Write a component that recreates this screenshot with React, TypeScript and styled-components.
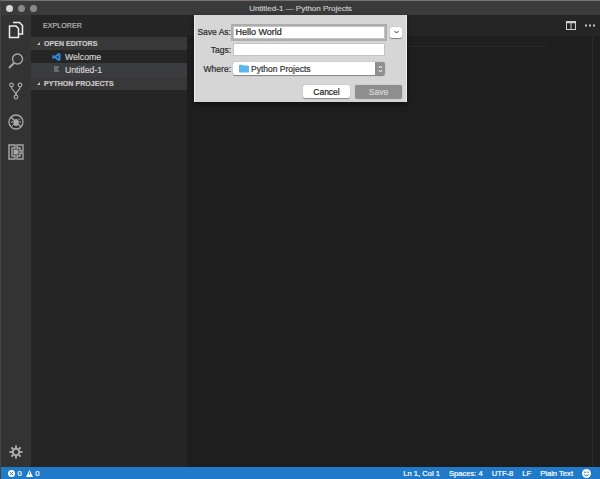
import React from "react";
import styled, { createGlobalStyle } from "styled-components";

const Global = createGlobalStyle`
  html, body { margin: 0; padding: 0; background: #fff; overflow: hidden; }
  * { box-sizing: border-box; }
`;
const Window = styled.div`
  position: relative; width: 600px; height: 479px; display: flex; flex-direction: column;
  background: #1e1e1e; font-family: "Liberation Sans", Arial, sans-serif; overflow: hidden;
  border-top: 1px solid #77716f; border-left: 1px solid #444;
  -webkit-text-stroke: 0.2px currentColor;
`;
const TitleBar = styled.div`
  position: relative; height: 14px; flex: none; background: #3b3b3b; display: flex; align-items: center; justify-content: center;
  color: #c6c6c6; font-size: 8px; font-weight: 400;
`;
const Lights = styled.div`
  position: absolute; left: 5px; top: 4px; display: flex; gap: 5px;
`;
const Light = styled.span<{ $c: string }>`
  width: 7px; height: 7px; border-radius: 50%; background: ${(p) => p.$c};
`;
const Body = styled.div`
  flex: 1; display: flex; min-height: 0;
`;
const Activity = styled.div`
  width: 30px; flex: none; background: #333; display: flex; flex-direction: column; align-items: center;
`;
const ActivityIcon = styled.div<{ $dim?: boolean }>`
  width: 30px; height: 30.5px; display: flex; align-items: center; justify-content: center;
  color: ${(p) => (p.$dim ? "#a8a8a8" : "#ececec")};
`;
const Spacer = styled.div`
  flex: 1;
`;
const Side = styled.div`
  width: 156px; flex: none; background: #252525; display: flex; flex-direction: column;
`;
const SideTitle = styled.div`
  height: 21.5px; padding: 0 0 0 12px; display: flex; align-items: center; color: #bbb; font-size: 7px; letter-spacing: 0.1px;
`;
const Section = styled.div`
  height: 13.4px; background: #383838; display: flex; align-items: center; gap: 4px; padding-left: 6px;
  color: #c8c8c8; font-size: 7px; font-weight: 700; letter-spacing: 0.05px;
`;
const Tri = styled.span`
  width: 0; height: 0; border-style: solid; border-width: 0 0 3px 3px; border-color: transparent transparent #c0c0c0 transparent;
`;
const FileRow = styled.div<{ $active?: boolean }>`
  height: 13.4px; display: flex; align-items: center; gap: 4px; padding-left: 21px; color: #d0d0d0; font-size: 8.7px;
  background: ${(p) => (p.$active ? "#3b3c40" : "transparent")};
`;
const FileIcon = styled.span`
  width: 9px; height: 9px; display: flex; align-items: center; justify-content: center; flex: none;
`;
const Editor = styled.div`
  flex: 1; display: flex; flex-direction: column; background: #1e1e1e; min-width: 0;
`;
const TabStrip = styled.div`
  height: 21px; flex: none; background: #252525; display: flex; align-items: center; justify-content: flex-end; gap: 9px; padding-right: 5px;
`;
const EditorBody = styled.div`
  flex: 1; display: flex; min-height: 0;
`;
const Code = styled.div`
  flex: 1; display: flex; flex-direction: column;
`;
const LineHighlight = styled.div`
  margin-top: 1px; height: 10px; background: #1f1f1f; border-bottom: 1px solid #282828;
`;
const MiniMap = styled.div`
  width: 52px; flex: none; display: flex; justify-content: flex-end; background: #1e1e1e;
`;
const ScrollEdge = styled.div`
  width: 8px; border-left: 1px solid #292929; background: #1f1f1f;
`;
const StatusBar = styled.div`
  height: 12px; flex: none; background: #207ac8; color: #fff; display: flex; align-items: center; justify-content: space-between;
  font-size: 7.6px; padding: 0 9px 0 7px;
`;
const StatusGroup = styled.div<{ $gap: number }>`
  display: flex; align-items: center; gap: ${(p) => p.$gap}px;
`;
const StatusItem = styled.span`
  display: inline-flex; align-items: center; gap: 2.5px;
`;
const Dialog = styled.div`
  position: absolute; left: 193px; top: 14px; width: 213px; height: 87px; background: #d6d6d6; color: #222;
  display: flex; flex-direction: column; padding: 9px 4px 0 0; font-size: 8.5px; box-shadow: 0 2px 5px rgba(0,0,0,.5); border-left: 1px solid #eee; border-right: 1px solid #eee;
`;
const FormRow = styled.div<{ $h: number }>`
  display: flex; align-items: center; height: ${(p) => p.$h}px; flex: none;
`;
const Label = styled.label`
  width: 36px; text-align: right; margin-right: 2px; flex: none; color: #2a2a2a;
`;
const Field = styled.div<{ $focus?: boolean }>`
  width: 152px; height: 13px; background: #fff; display: flex; align-items: center; padding-left: 1.5px; color: #222; font-size: 9px;
  border: 1px solid #c4c4c4;
  outline: ${(p) => (p.$focus ? "2px solid #adadad" : "none")};
  outline-offset: -0.5px;
`;
const Expand = styled.div`
  width: 12px; height: 11px; margin-left: 5px; background: #fff; border-radius: 2px; display: flex; align-items: center; justify-content: center; box-shadow: 0 0.5px 1px rgba(0,0,0,.4);
`;
const Select = styled.div`
  width: 152px; height: 13px; background: #fff; border-radius: 2px; display: flex; align-items: center; padding-left: 6px; gap: 2px; color: #333; font-size: 8.5px; box-shadow: 0 0.5px 1px rgba(0,0,0,.4); position: relative;
`;
const SelectStepper = styled.div`
  position: absolute; right: 0; top: 0; bottom: 0; width: 10px; background: #8f8f8f; border-radius: 0 2px 2px 0; display: flex; align-items: center; justify-content: center;
`;
const Actions = styled.div`
  display: flex; justify-content: flex-end; gap: 5px; margin-top: 7px;
`;
const Btn = styled.button<{ $disabled?: boolean }>`
  width: 47px; height: 13px; border: 0; padding: 0; border-radius: 2px; font: inherit; font-size: 8.5px;
  background: ${(p) => (p.$disabled ? "#8e8e8e" : "#fff")};
  color: ${(p) => (p.$disabled ? "#d8d8d8" : "#222")};
  box-shadow: 0 0.5px 1px rgba(0,0,0,.35);
`;

export default function App() {
  return (
    <Window>
      <Global />
      <TitleBar>
        <Lights>
          <Light $c="#d8d8d8" /><Light $c="#8a8a8a" /><Light $c="#8a8a8a" />
        </Lights>
        Untitled-1 — Python Projects
      </TitleBar>
      <Body>
        <Activity>
          <ActivityIcon>
            <svg width="18" height="18" viewBox="0 0 18 18" fill="none" stroke="currentColor" strokeWidth="1.5">
              <path d="M6 1.500h6.500l3 3V13H12" /><path d="M2.500 5H9l2.500 2.500v9h-9z" fill="#333" />
            </svg>
          </ActivityIcon>
          <ActivityIcon $dim>
            <svg width="18" height="18" viewBox="0 0 18 18" fill="none" stroke="currentColor" strokeWidth="1.4">
              <circle cx="10.500" cy="7" r="5" /><path d="M7 11l-5 5" strokeWidth="2" />
            </svg>
          </ActivityIcon>
          <ActivityIcon $dim>
            <svg width="18" height="18" viewBox="0 0 18 18" fill="none" stroke="currentColor" strokeWidth="1.2">
              <circle cx="4.500" cy="3" r="1.800" /><circle cx="13" cy="3" r="1.800" /><circle cx="9" cy="15" r="1.800" />
              <path d="M4.500 5c0 4 4.500 3.500 4.500 8M13 5c0 4-4 3.500-4 8" />
            </svg>
          </ActivityIcon>
          <ActivityIcon $dim>
            <svg width="18" height="18" viewBox="0 0 18 18" fill="none" stroke="currentColor" strokeWidth="1.300">
              <circle cx="9" cy="9" r="7" /><path d="M4 4l10 10" /><ellipse cx="9" cy="9.500" rx="2.500" ry="3.500" fill="currentColor" stroke="none" />
              <path d="M4 9h10M5 5.500l2 2M13 5.500l-2 2M5 13l2-2M13 13l-2-2" strokeWidth="1" />
            </svg>
          </ActivityIcon>
          <ActivityIcon $dim>
            <svg width="16" height="16" viewBox="0 0 16 16" fill="none" stroke="currentColor" strokeWidth="1.400">
              <path d="M1 1h6v3H4v8h3v3H1zM9 1h6v6h-3V4H9zM9 15v-3h3V9h3v6z" /><rect x="5.500" y="5.500" width="5" height="5" fill="currentColor" stroke="none" />
            </svg>
          </ActivityIcon>
          <Spacer />
          <ActivityIcon $dim>
            <svg width="14" height="14" viewBox="0 0 14 14" fill="none" stroke="currentColor">
              <circle cx="7" cy="7" r="3.200" strokeWidth="2" />
              <path strokeWidth="2" d="M7 .5v2.500M7 11v2.500M.5 7H3M11 7h2.500M2.400 2.400l1.800 1.800M9.800 9.800l1.800 1.800M2.400 11.600l1.800-1.800M9.800 4.200l1.800-1.800" />
            </svg>
          </ActivityIcon>
        </Activity>
        <Side>
          <SideTitle>EXPLORER</SideTitle>
          <Section><Tri />OPEN EDITORS</Section>
          <FileRow>
            <FileIcon>
              <svg width="10" height="10" viewBox="0 0 10 10" fill="none">
                <path d="M7 .5l2.500 1v7L7 9.500 3 6 1.200 7.300.3 6.800V3.200l.9-.5L3 4z" fill="#2f8ad8" /><path d="M7 3L5 5l2 2z" fill="#252525" />
              </svg>
            </FileIcon>
            Welcome
          </FileRow>
          <FileRow $active>
            <FileIcon>
              <svg width="7" height="7" viewBox="0 0 7 7" stroke="#9a9a9a" strokeWidth="1">
                <path d="M1 1h5M1 3h4M1 5h5" />
              </svg>
            </FileIcon>
            Untitled-1
          </FileRow>
          <Section><Tri />PYTHON PROJECTS</Section>
        </Side>
        <Editor>
          <TabStrip>
            <svg width="10" height="9" viewBox="0 0 10 9" fill="none" stroke="#d0d0d0">
              <rect x=".5" y=".5" width="9" height="8" /><path d="M5 1v7" /><path d="M0 1.500h10" strokeWidth="1.500" />
            </svg>
            <svg width="10" height="3" viewBox="0 0 10 3" fill="#c4c4c4">
              <rect x="0" y=".5" width="2" height="2" /><rect x="4" y=".5" width="2" height="2" /><rect x="8" y=".5" width="2" height="2" />
            </svg>
          </TabStrip>
          <EditorBody>
            <Code><LineHighlight /></Code>
            <MiniMap><ScrollEdge /></MiniMap>
          </EditorBody>
        </Editor>
      </Body>
      <StatusBar>
        <StatusGroup $gap={4}>
          <StatusItem>
            <svg width="7" height="7" viewBox="0 0 7 7"><circle cx="3.500" cy="3.500" r="3.500" fill="#fff" /><path d="M2 2l3 3M5 2L2 5" stroke="#207ac8" /></svg>
            0
          </StatusItem>
          <StatusItem>
            <svg width="7" height="7" viewBox="0 0 7 7"><path d="M3.500 0L7 7H0z" fill="#fff" /><path d="M3.500 2.500v2" stroke="#207ac8" /></svg>
            0
          </StatusItem>
        </StatusGroup>
        <StatusGroup $gap={9}>
          <span>Ln 1, Col 1</span>
          <span>Spaces: 4</span>
          <span>UTF-8</span>
          <span>LF</span>
          <span>Plain Text</span>
          <svg width="9" height="9" viewBox="0 0 9 9"><circle cx="4.500" cy="4.500" r="4.500" fill="#fff" /><circle cx="3" cy="3.300" r=".8" fill="#207ac8" /><circle cx="6" cy="3.300" r=".8" fill="#207ac8" /><path d="M2 5.200c1 2 4 2 5 0" stroke="#207ac8" fill="none" /></svg>
        </StatusGroup>
      </StatusBar>
      <Dialog>
        <FormRow $h={16}>
          <Label>Save As:</Label>
          <Field $focus>Hello World</Field>
          <Expand>
            <svg width="5" height="4" viewBox="0 0 5 4" fill="none" stroke="#333"><path d="M.5 1l2 2 2-2" /></svg>
          </Expand>
        </FormRow>
        <FormRow $h={19}>
          <Label>Tags:</Label>
          <Field />
        </FormRow>
        <FormRow $h={19}>
          <Label>Where:</Label>
          <Select>
            <svg width="10" height="9" viewBox="0 0 11 9"><path d="M0 1.500C0 .7.500 .3 1 .3h3l1 1h5c.6 0 1 .4 1 1V8c0 .6-.4 1-1 1H1c-.6 0-1-.4-1-1z" fill="#5db5ee" /></svg>
            Python Projects
            <SelectStepper>
              <svg width="5" height="8" viewBox="0 0 5 8" fill="none" stroke="#fff"><path d="M.8 3l1.700-2 1.700 2M.8 5l1.700 2 1.700-2" /></svg>
            </SelectStepper>
          </Select>
        </FormRow>
        <Actions>
          <Btn>Cancel</Btn>
          <Btn $disabled>Save</Btn>
        </Actions>
      </Dialog>
    </Window>
  );
}
